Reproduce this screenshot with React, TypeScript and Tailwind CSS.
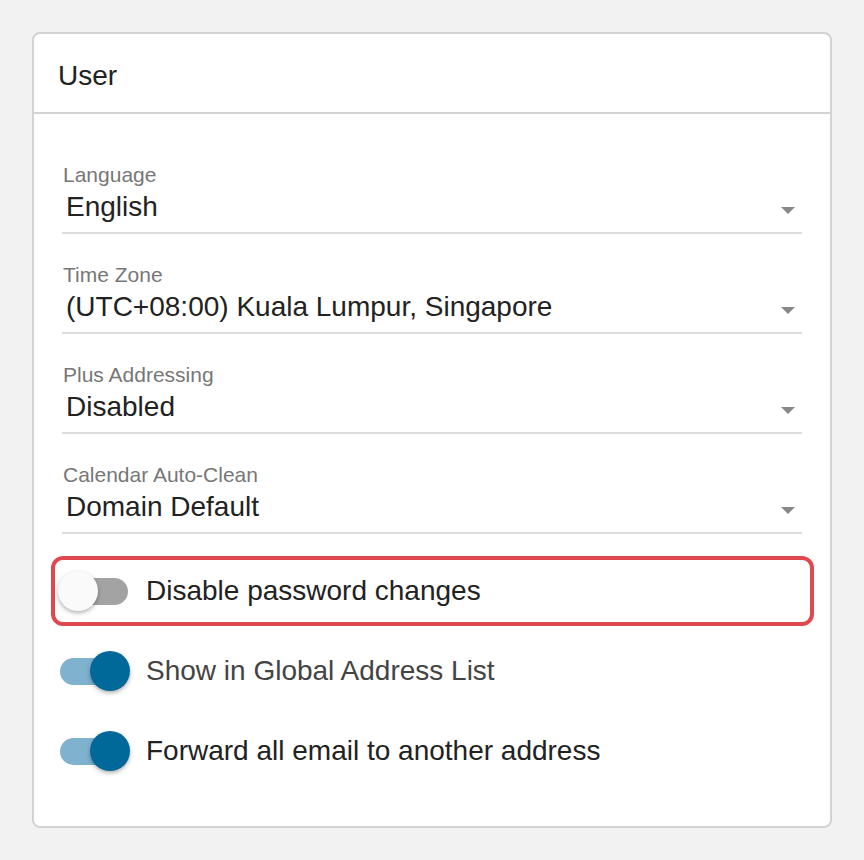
import React, { useState } from 'react';

interface SelectFieldProps {
  label: string;
  value: string;
}

const SelectField: React.FC<SelectFieldProps> = ({ label, value }) => {
  return (
    <div className="mt-[29px] first:mt-0">
      <div className="h-[24px] text-[21px] leading-[24px] text-[#777777] pl-[1px]">{label}</div>
      <div className="mt-[2px] flex items-center justify-between h-[36px] border-b-2 border-[#dddddd] box-content pb-[7px]">
        <span className="pl-[4px] text-[28px] leading-[36px] text-[#222222]">{value}</span>
        <span className="mr-[7px] mt-[6px] w-0 h-0 border-l-[7px] border-r-[7px] border-t-[7px] border-l-transparent border-r-transparent border-t-[#888888]" />
      </div>
    </div>
  );
};

interface ToggleRowProps {
  label: string;
  checked: boolean;
  highlighted?: boolean;
  textColor?: string;
  onToggle: () => void;
}

const ToggleRow: React.FC<ToggleRowProps> = ({ label, checked, highlighted, textColor, onToggle }) => {
  return (
    <div
      className={`flex items-center h-[70px] border-[4px] rounded-[12px] pl-[3px] ${highlighted ? 'border-[#e04850]' : 'border-transparent'
        }`}
    >
      <button onClick={onToggle} className="relative w-[72px] h-[40px] shrink-0 cursor-pointer">
        <span
          className={`absolute left-[2px] right-[2px] top-[6.5px] h-[27px] rounded-full ${checked ? 'bg-[#7fb2cf]' : 'bg-[#a3a3a3]'
            }`}
        />
        <span
          className={`absolute top-0 w-[40px] h-[40px] rounded-full shadow-[0_2px_4px_rgba(0,0,0,0.3)] ${checked ? 'left-[32px] bg-[#006999]' : 'left-0 bg-[#fafafa]'
            }`}
        />
      </button>
      <span className={`ml-[16px] text-[28px] leading-[36px] ${textColor || 'text-[#222222]'}`}>{label}</span>
    </div>
  );
};

const App: React.FC = () => {
  const [disablePw, setDisablePw] = useState<boolean>(false);
  const [showGal, setShowGal] = useState<boolean>(true);
  const [forward, setForward] = useState<boolean>(true);

  return (
    <div
      className="min-h-[860px] bg-[#f2f2f2] pt-[32px] pl-[32px]"
      style={{ fontFamily: '"Liberation Sans", Arial, sans-serif' }}
    >
      <div className="w-[800px] h-[796px] bg-white border-2 border-[#d3d3d3] rounded-[8px]">
        <div className="h-[80px] border-b-2 border-[#d3d3d3] flex items-center pl-[24px]">
          <span className="text-[28px] leading-[36px] text-[#222222] mt-[6px]">User</span>
        </div>

        <div className="pt-[49px] px-[28px]">
          <SelectField label="Language" value="English" />
          <SelectField label="Time Zone" value="(UTC+08:00) Kuala Lumpur, Singapore" />
          <SelectField label="Plus Addressing" value="Disabled" />
          <SelectField label="Calendar Auto-Clean" value="Domain Default" />
        </div>

        <div className="mt-[22px] ml-[17px] mr-[16px] flex flex-col gap-[10px]">
          <ToggleRow
            label="Disable password changes"
            checked={disablePw}
            highlighted
            onToggle={() => setDisablePw(!disablePw)}
          />
          <ToggleRow
            label="Show in Global Address List"
            checked={showGal}
            textColor="text-[#444444]"
            onToggle={() => setShowGal(!showGal)}
          />
          <ToggleRow
            label="Forward all email to another address"
            checked={forward}
            onToggle={() => setForward(!forward)}
          />
        </div>
      </div>
    </div>
  );
};

export default App;
